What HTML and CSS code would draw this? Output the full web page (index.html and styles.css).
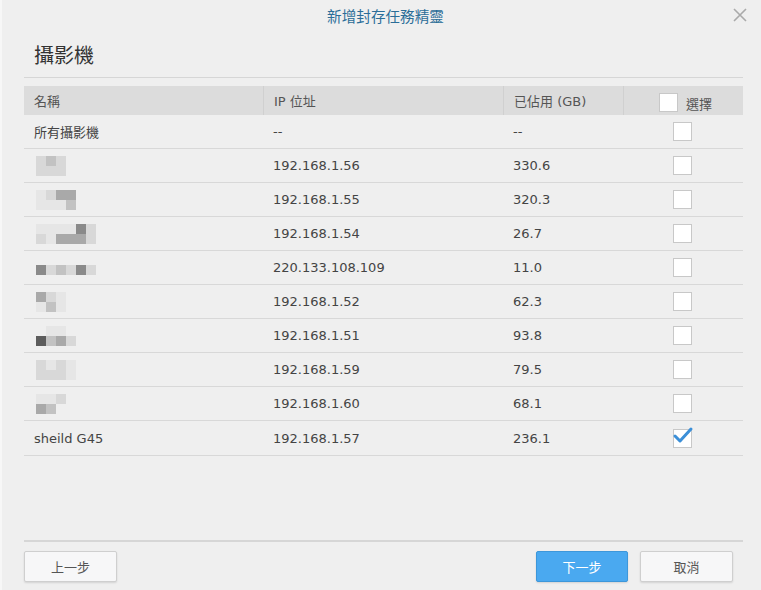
FILE: index.html
```html
<!DOCTYPE html>
<html lang="zh-Hant">
<head>
    <meta charset="UTF-8">
    <title>新增封存任務精靈</title>
    <link rel="stylesheet" href="styles.css">
</head>
<body>
    <div class="dialog">
        <div class="titlebar">
            <span class="title">新增封存任務精靈</span>
            <span class="close">
                <svg width="14" height="14" viewBox="0 0 14 14"><path d="M1 1L13 13M13 1L1 13" stroke="#aaa" stroke-width="1.6" fill="none"/></svg>
            </span>
        </div>

        <div class="content">
            <h2 class="heading">攝影機</h2>

            <div class="grid">
                <div class="row head">
                    <div class="cell">名稱</div>
                    <div class="cell">IP 位址</div>
                    <div class="cell">已佔用 (GB)</div>
                    <div class="cell pick"><span class="box"></span><span class="pick-label">選擇</span></div>
                </div>

                <div class="row">
                    <div class="cell">所有攝影機</div>
                    <div class="cell">--</div>
                    <div class="cell">--</div>
                    <div class="cell check"><span class="box"></span></div>
                </div>

                <!-- names are pixelated in the source, drawn as blocks -->
                <div class="row">
                    <div class="cell"><div class="mosaic c3">
                        <i class="s2"></i><i class="s3"></i><i class="s2"></i>
                        <i class="s2"></i><i class="s2"></i><i class="s2"></i>
                    </div></div>
                    <div class="cell">192.168.1.56</div>
                    <div class="cell">330.6</div>
                    <div class="cell check"><span class="box"></span></div>
                </div>

                <div class="row">
                    <div class="cell"><div class="mosaic c4">
                        <i class="s1"></i><i class="s2"></i><i class="s4"></i><i class="s4"></i>
                        <i class="s1"></i><i class="s1"></i><i class="s1"></i><i class="s3"></i>
                    </div></div>
                    <div class="cell">192.168.1.55</div>
                    <div class="cell">320.3</div>
                    <div class="cell check"><span class="box"></span></div>
                </div>

                <div class="row">
                    <div class="cell"><div class="mosaic c6">
                        <i class="s1"></i><i class="s1"></i><i class="s1"></i><i class="s1"></i><i class="s5"></i><i class="s2"></i>
                        <i class="s2"></i><i class="s1"></i><i class="s4"></i><i class="s4"></i><i class="s4"></i><i class="s2"></i>
                    </div></div>
                    <div class="cell">192.168.1.54</div>
                    <div class="cell">26.7</div>
                    <div class="cell check"><span class="box"></span></div>
                </div>

                <div class="row">
                    <div class="cell"><div class="mosaic c6 one">
                        <i class="s5"></i><i class="s2"></i><i class="s3"></i><i class="s2"></i><i class="s5"></i><i class="s2"></i>
                    </div></div>
                    <div class="cell">220.133.108.109</div>
                    <div class="cell">11.0</div>
                    <div class="cell check"><span class="box"></span></div>
                </div>

                <div class="row">
                    <div class="cell"><div class="mosaic c3">
                        <i class="s4"></i><i class="s2"></i><i class="s1"></i>
                        <i class="s1"></i><i class="s3"></i><i class="s1"></i>
                    </div></div>
                    <div class="cell">192.168.1.52</div>
                    <div class="cell">62.3</div>
                    <div class="cell check"><span class="box"></span></div>
                </div>

                <div class="row">
                    <div class="cell"><div class="mosaic c4">
                        <i class="s0"></i><i class="s1"></i><i class="s1"></i><i class="s0"></i>
                        <i class="s6"></i><i class="s3"></i><i class="s4"></i><i class="s2"></i>
                    </div></div>
                    <div class="cell">192.168.1.51</div>
                    <div class="cell">93.8</div>
                    <div class="cell check"><span class="box"></span></div>
                </div>

                <div class="row">
                    <div class="cell"><div class="mosaic c4">
                        <i class="s2"></i><i class="s1"></i><i class="s2"></i><i class="s1"></i>
                        <i class="s2"></i><i class="s2"></i><i class="s2"></i><i class="s1"></i>
                    </div></div>
                    <div class="cell">192.168.1.59</div>
                    <div class="cell">79.5</div>
                    <div class="cell check"><span class="box"></span></div>
                </div>

                <div class="row">
                    <div class="cell"><div class="mosaic c3">
                        <i class="s1"></i><i class="s1"></i><i class="s2"></i>
                        <i class="s4"></i><i class="s3"></i><i class="s0"></i>
                    </div></div>
                    <div class="cell">192.168.1.60</div>
                    <div class="cell">68.1</div>
                    <div class="cell check"><span class="box"></span></div>
                </div>

                <div class="row">
                    <div class="cell">sheild G45</div>
                    <div class="cell">192.168.1.57</div>
                    <div class="cell">236.1</div>
                    <div class="cell check"><span class="box checked">
                        <svg width="22" height="20" viewBox="0 0 22 20"><path d="M3 10L8 15L19 3" stroke="#3b8fd8" stroke-width="3" fill="none" stroke-linecap="round" stroke-linejoin="round"/></svg>
                    </span></div>
                </div>
            </div>
        </div>

        <div class="footer">
            <button class="btn">上一步</button>
            <div class="spacer"></div>
            <button class="btn primary">下一步</button>
            <button class="btn">取消</button>
        </div>
    </div>
</body>
</html>
```

FILE: styles.css
```css
body {
    margin: 0;
    background: #efefef;
    font-family: "DejaVu Sans", "Noto Sans CJK TC", sans-serif;
    font-size: 13px;
    color: #444;
}
.dialog {
    width: 761px;
    height: 590px;
    display: flex;
    flex-direction: column;
    box-sizing: border-box;
    border-left: 2px solid #f7f7f7;
}
.titlebar {
    position: relative;
    height: 30px;
    display: flex;
    align-items: center;
    justify-content: center;
}
.title {
    margin-left: 8px;
    font-family: "Noto Sans CJK TC", sans-serif;
    font-size: 14.6px;
    color: #2b6d98;
}
.close {
    position: absolute;
    right: 14px;
    top: 8px;
    line-height: 0;
}
.content {
    flex: 1;
    padding: 0 18px 0 22px;
}
.heading {
    margin: 0;
    padding: 11px 0 9px 10px;
    font-family: "Noto Sans CJK TC", sans-serif;
    font-size: 20px;
    font-weight: normal;
    line-height: 27px;
    color: #333;
    border-bottom: 1px solid #d6d6d6;
}
.grid {
    margin-top: 8px;
}
.row {
    display: grid;
    grid-template-columns: 239px 240px 120px 120px;
    height: 34px;
    box-sizing: border-box;
    border-bottom: 1px solid #d8d8d8;
}
.row:last-child {
    height: 35px;
}
.row.head {
    height: 29px;
    background: #dcdcdc;
    border-bottom: none;
    color: #555;
}
.cell {
    display: flex;
    align-items: center;
    padding-left: 10px;
    overflow: hidden;
    white-space: nowrap;
}
.head .cell + .cell {
    border-left: 1px solid #d0d0d0;
}
.cell.pick {
    padding-left: 35px;
}
.pick .box {
    margin-top: 4px;
}
.pick-label {
    margin-left: 8px;
    margin-top: 6px;
}
.cell.check {
    padding-left: 50px;
}
.box {
    position: relative;
    display: inline-block;
    width: 17px;
    height: 17px;
    background: #fff;
    border: 1px solid #c8c8c8;
}
.box svg {
    position: absolute;
    left: -2px;
    top: -4px;
}
.mosaic {
    display: grid;
    grid-auto-rows: 10px;
    margin-left: 2px;
}
.mosaic.c3 { grid-template-columns: repeat(3, 10px); }
.mosaic.c4 { grid-template-columns: repeat(4, 10px); }
.mosaic.c6 { grid-template-columns: repeat(6, 10px); }
.mosaic.one { margin-top: 4px; }
.mosaic i { display: block; }
.s0 { background: transparent; }
.s1 { background: #e6e6e6; }
.s2 { background: #d8d8d8; }
.s3 { background: #c2c2c2; }
.s4 { background: #a9a9a9; }
.s5 { background: #8a8a8a; }
.s6 { background: #5c5c5c; }
.footer {
    display: flex;
    align-items: center;
    gap: 12px;
    margin: 0 18px 0 22px;
    padding: 9px 10px 8px 0;
    border-top: 2px solid #d6d6d6;
}
.spacer {
    flex: 1;
}
.btn {
    width: 93px;
    height: 31px;
    background: #f7f7f8;
    border: 1px solid #cfcfcf;
    border-radius: 2px;
    box-shadow: 0 1px 2px rgba(0, 0, 0, 0.12);
    font-family: "Noto Sans CJK TC", sans-serif;
    font-size: 13px;
    color: #555;
}
.btn.primary {
    width: 92px;
    background: #4aa9f0;
    border-color: #3d97da;
    color: #fff;
}
```
